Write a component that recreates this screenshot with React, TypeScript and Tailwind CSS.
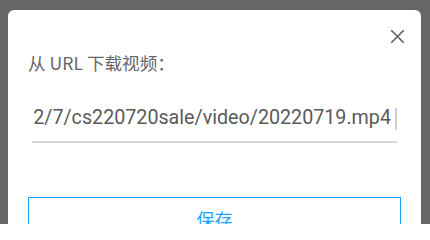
import { X } from "lucide-react";

const URL_TAIL = "2/7/cs220720sale/video/20220719.mp4";

export default function App() {
  return (
    <div className="h-[224px] w-[430px] overflow-hidden bg-[#666666] pl-[8px] pr-[9px] pt-[10px]">
      <div className="relative h-[230px] rounded-t-[6px] bg-white px-[20px] pt-[40px] font-['Roboto','Noto_Sans_CJK_SC',sans-serif]">
        <button className="absolute right-[12px] top-[15px] text-[#666666]">
          <X size={23} strokeWidth={1.8} />
        </button>

        <div className="text-[17.6px] leading-[26px] text-[#666666] font-['Noto_Sans_CJK_SC',sans-serif]">
          从 URL 下载视频：
        </div>

        <div className="mx-[4px] mt-[30px] flex h-[37px] items-start justify-end overflow-hidden border-b-2 border-[#d6d6d6]">
          <span className="whitespace-nowrap text-[19.7px] leading-[24px] text-[#5a5a5a] font-['Roboto',sans-serif]">
            {URL_TAIL}
          </span>
          <span className="ml-[4px] mt-[2px] h-[22px] w-[2px] shrink-0 bg-[#cfcfcf]" />
        </div>

        <button className="mt-[54px] flex h-[44px] w-full items-center justify-center border border-[#1ea0ff] text-[18px] text-[#1ea0ff] font-['Noto_Sans_CJK_SC',sans-serif]">
          保存
        </button>
      </div>
    </div>
  );
}
